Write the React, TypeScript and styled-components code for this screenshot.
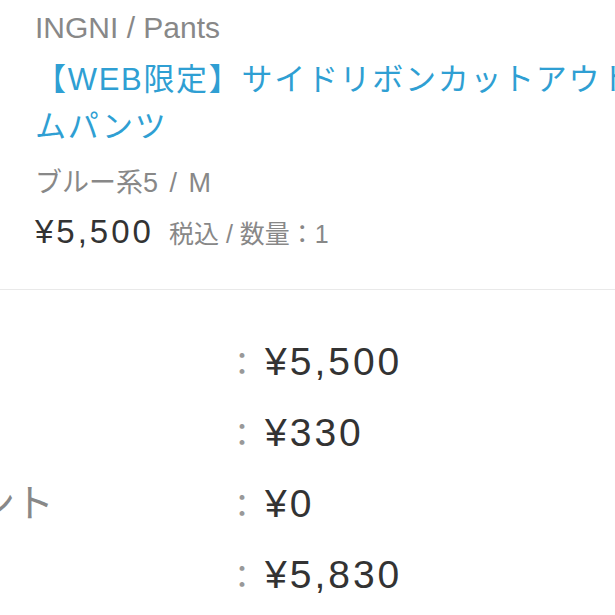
import styled, { createGlobalStyle } from 'styled-components';

// Global
const GlobalStyle = createGlobalStyle`
  html, body {
    margin: 0;
    padding: 0;
    background: #fff;
    overflow: hidden;
  }

  body {
    font-family: 'Liberation Sans', 'Noto Sans CJK JP', sans-serif;
    color: #333;
  }
`;

// Styles
const Page = styled.div`
  box-sizing: border-box;
  width: 930px;
  margin-left: -215px;
  padding: 8px 0 0 35px;
`;

const ProductRow = styled.div`
  display: flex;
  gap: 35px;
  padding-bottom: 35px;
  border-bottom: 1px solid #e9e9e9;
`;

const Thumb = styled.div`
  flex: none;
  width: 180px;
  height: 240px;
  background: #f3f3f3;
`;

const Info = styled.div`
  flex: 1;
  min-width: 0;
`;

const Brand = styled.p`
  margin: 0;
  font-size: 30px;
  line-height: 40px;
  color: #888;
`;

const Title = styled.p`
  margin: 8px 0 0;
  font-size: 31px;
  line-height: 47px;
  letter-spacing: 1.7px;
  color: #2f9fd3;
`;

const Variant = styled.p`
  margin: 13px 0 0;
  font-size: 27px;
  line-height: 40px;
  word-spacing: 4px;
  color: #888;
`;

const PriceRow = styled.div`
  display: flex;
  align-items: baseline;
  margin-top: 7px;
`;

const Price = styled.span`
  font-size: 33px;
  line-height: 44px;
  letter-spacing: 3px;
  color: #333;
`;

const Tax = styled.span`
  margin-left: 15px;
  font-size: 25px;
  line-height: 25px;
  color: #888;
`;

const Summary = styled.div`
  display: grid;
  grid-template-columns: 406px auto 1fr;
  grid-auto-rows: 71px;
  align-items: baseline;
  padding-top: 36px;
  font-size: 39px;
  line-height: 71px;
`;

const Label = styled.span`
  color: #888;
  white-space: nowrap;
`;

const Colon = styled.span`
  margin-right: 7px;
  font-size: 32px;
  line-height: 32px;
  color: #999;
`;

const Value = styled.span`
  letter-spacing: 3px;
  color: #333;
`;

const rows = [
  { label: '小計', value: '¥5,500' },
  { label: '送料', value: '¥330' },
  { label: '利用ポイント', value: '¥0' },
  { label: '合計', value: '¥5,830' },
];

// Main Component
const App = () => {
  return (
    <>
      <GlobalStyle />
      <Page>
        <ProductRow>
          <Thumb />
          <Info>
            <Brand>INGNI / Pants</Brand>
            <Title>【WEB限定】サイドリボンカットアウトスリムパンツ</Title>
            <Variant>ブルー系5 / M</Variant>
            <PriceRow>
              <Price>¥5,500</Price>
              <Tax>税込 / 数量：1</Tax>
            </PriceRow>
          </Info>
        </ProductRow>

        <Summary>
          {rows.map((row) => (
            <div key={row.label} style={{ display: 'contents' }}>
              <Label>{row.label}</Label>
              <Colon>：</Colon>
              <Value>{row.value}</Value>
            </div>
          ))}
        </Summary>
      </Page>
    </>
  );
};

export default App;
